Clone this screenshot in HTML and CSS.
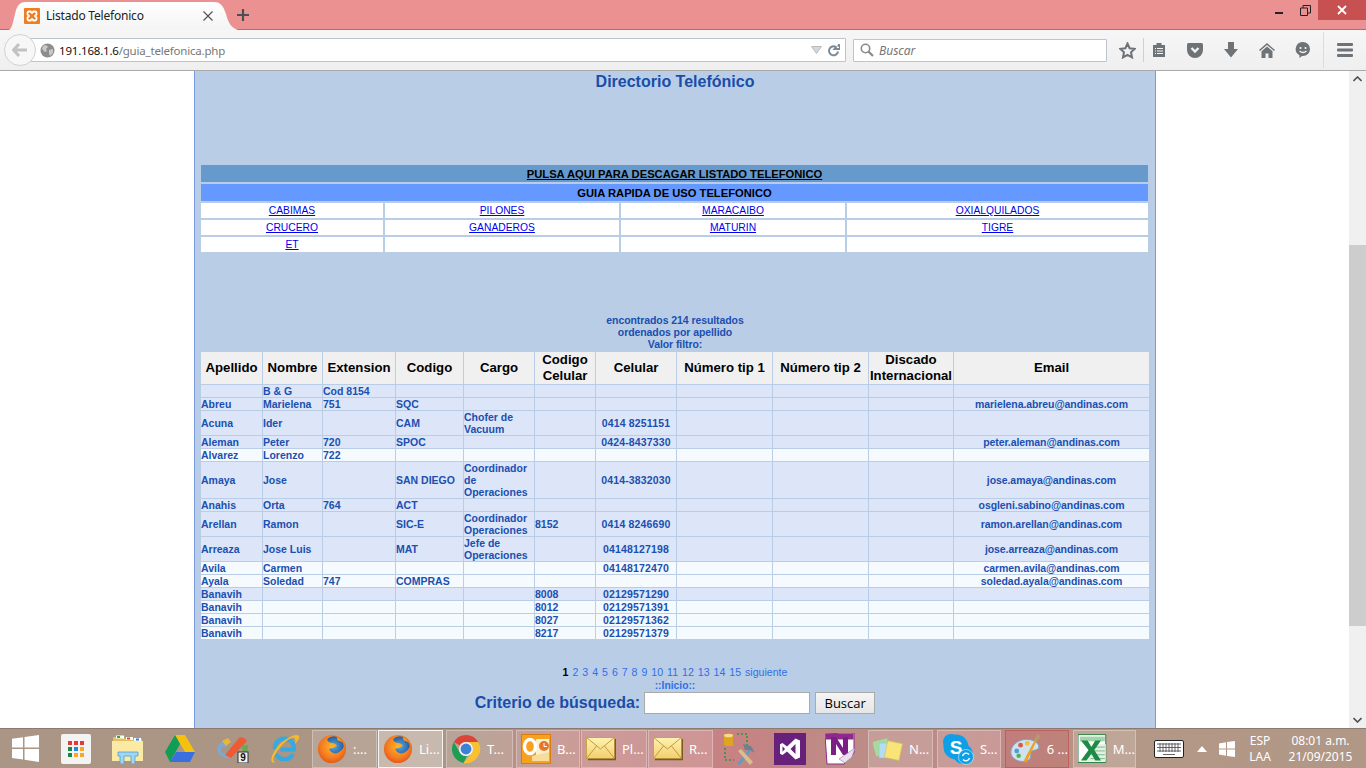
FILE: index.html
```html
<!DOCTYPE html>
<html lang="es">
<head>
<meta charset="utf-8">
<title>Listado Telefonico</title>
<link rel="stylesheet" href="styles.css">
</head>
<body>
<svg class="defs" width="0" height="0" aria-hidden="true">
  <defs>
    <radialGradient id="ffo" cx="0.5" cy="0.4" r="0.7"><stop offset="0" stop-color="#ffb627"/><stop offset="0.6" stop-color="#f47b20"/><stop offset="1" stop-color="#d9481c"/></radialGradient>
    <radialGradient id="ffb" cx="0.5" cy="0.5" r="0.6"><stop offset="0" stop-color="#5aa8e0"/><stop offset="1" stop-color="#1b4f96"/></radialGradient>
    <linearGradient id="env" x1="0" y1="0" x2="0" y2="1"><stop offset="0" stop-color="#fff3b0"/><stop offset="1" stop-color="#f3cf6e"/></linearGradient>
    <symbol id="firefox" viewBox="0 0 32 32">
      <circle cx="16" cy="16" r="15" fill="url(#ffo)"/>
      <circle cx="18" cy="13" r="10.5" fill="url(#ffb)"/>
      <path d="M2 15C3 8 7 3 12 2C10 5 11 8 14 9C17 10 21 10 21 13C19 15 15 15 13 16C15 21 20 22 24 19C27 17 29 14 30 11C32 21 25 31 15 31C7 31 1 23 2 15Z" fill="url(#ffo)"/>
      <path d="M21 3C24 4 27 7 28 10C26 8 24 7 22 7Z" fill="#f59a23"/>
    </symbol>
    <symbol id="envelope" viewBox="0 0 30 24">
      <rect x="0.5" y="0.5" width="28" height="21" fill="url(#env)" stroke="#c9a24a"/>
      <path d="M0.5 0.5L14.5 12L28.5 0.5M0.5 21.5L10.5 9M28.5 21.5L18.5 9" fill="none" stroke="#c09a45"/>
      <path d="M2 22.5H29.5V2" fill="none" stroke="#7a5a1e" stroke-width="1.5"/>
    </symbol>
  </defs>
</svg>

<header class="titlebar">
  <div class="tab">
    <svg class="favicon" width="16" height="16" viewBox="0 0 16 16"><rect width="16" height="16" rx="1" fill="#ef7d22"/><path d="M3.5 5Q3.5 3.5 5 3.5H6.5L8 5L9.5 3.5H11Q12.5 3.5 12.5 5V6.5L11 8L12.5 9.5V11Q12.5 12.5 11 12.5H9.5L8 11L6.5 12.5H5Q3.5 12.5 3.5 11V9.5L5 8L3.5 6.5Z" fill="none" stroke="#fff" stroke-width="1.8"/></svg>
    <span class="tab-title">Listado Telefonico</span>
    <svg class="tab-close" width="10" height="10" viewBox="0 0 10 10"><path d="M0.5 0.5L9.5 9.5M9.5 0.5L0.5 9.5" stroke="#555" stroke-width="1.2"/></svg>
  </div>
  <svg class="newtab" width="14" height="14" viewBox="0 0 14 14"><path d="M7 1V13M1 7H13" stroke="#4a4f55" stroke-width="2.2"/></svg>
  <div class="winctl">
    <span class="win-btn"><svg width="10" height="10" viewBox="0 0 10 10"><rect x="1" y="7" width="8" height="2" fill="#222"/></svg></span>
    <span class="win-btn"><svg width="11" height="11" viewBox="0 0 11 11"><path d="M0.5 3H7.5V10.5H0.5ZM3 3V0.5H10.5V8H7.5" fill="none" stroke="#222"/></svg></span>
    <span class="win-close"><svg width="10" height="10" viewBox="0 0 10 10"><path d="M1 1L9 9M9 1L1 9" stroke="#fff" stroke-width="1.8"/></svg></span>
  </div>
</header>

<nav class="navbar">
  <span class="back"><svg width="16" height="14" viewBox="0 0 16 14"><path d="M7 1L1.5 7L7 13M2 7H15" fill="none" stroke="#c2c2c2" stroke-width="3"/></svg></span>
  <div class="urlbar">
    <svg class="globe" width="15" height="15" viewBox="0 0 15 15"><circle cx="7.5" cy="7.5" r="7" fill="#8d8d8d"/><path d="M3 3L6 2L8 4L6 6L7 8L5 9L2 6ZM9 7L13 6L13 10L10 13L9 10Z" fill="#c9c9c9"/></svg>
    <span class="url-host">191.168.1.6</span><span class="url-path">/guia_telefonica.php</span>
    <svg class="url-drop" width="11" height="8" viewBox="0 0 11 8"><path d="M0.5 0.5H10.5L5.5 7.5Z" fill="#d4d8dc" stroke="#b8bcc0"/></svg>
    <svg class="url-reload" width="13" height="13" viewBox="0 0 13 13"><path d="M11 7.5A4.5 4.5 0 1 1 9 3L7.5 5H13V0L10.8 2.2" fill="none" stroke="#7d8a96" stroke-width="2"/></svg>
  </div>
  <div class="searchbar">
    <svg width="14" height="14" viewBox="0 0 14 14"><circle cx="5.5" cy="5.5" r="4.2" fill="none" stroke="#8a8a8a" stroke-width="1.6"/><path d="M8.5 8.5L13 13" stroke="#8a8a8a" stroke-width="2.2"/></svg>
    <span class="search-ph">Buscar</span>
  </div>
  <span class="tb tb-star"><svg width="17" height="17" viewBox="0 0 17 17"><path d="M8.5 1.5L10.6 6.2L15.8 6.8L12 10.3L13 15.4L8.5 12.9L4 15.4L5 10.3L1.2 6.8L6.4 6.2Z" fill="none" stroke="#6e7378" stroke-width="2"/></svg></span>
  <span class="tb tb-reader"><svg width="14" height="16" viewBox="0 0 14 16"><path d="M1 3H4.5V1H9.5V3H13V15H1Z" fill="#6e7378"/><path d="M3 6H4V7H3ZM5 6H11V7H5ZM3 8.5H4V9.5H3ZM5 8.5H11V9.5H5ZM3 11H4V12H3ZM5 11H11V12H5Z" fill="#f2f2f2"/></svg></span>
  <span class="tb"><svg width="16" height="15" viewBox="0 0 16 15"><path d="M0 1.5Q0 0 1.5 0H14.5Q16 0 16 1.5V7A8 8 0 0 1 0 7Z" fill="#6e7378"/><path d="M4.5 5L8 8.5L11.5 5" fill="none" stroke="#f2f2f2" stroke-width="2.4"/></svg></span>
  <span class="tb"><svg width="14" height="16" viewBox="0 0 14 16"><path d="M4 0H10V7H14L7 15.5L0 7H4Z" fill="#6e7378"/></svg></span>
  <span class="tb"><svg width="16" height="15" viewBox="0 0 16 15"><path d="M8 0L16 7L15 8L8 2L1 8L0 7Z" fill="#6e7378"/><path d="M8 3.5L13.5 8.2V15H9.5V10.5H6.5V15H2.5V8.2Z" fill="#6e7378"/></svg></span>
  <span class="tb"><svg width="16" height="16" viewBox="0 0 16 16"><path d="M8 0A7 7 0 0 1 8 14H7L4.5 16V13.2A7 7 0 0 1 8 0Z" fill="#6e7378"/><circle cx="5.5" cy="6" r="1.1" fill="#f2f2f2"/><circle cx="10.5" cy="6" r="1.1" fill="#f2f2f2"/><path d="M4.5 9Q8 12 11.5 9" fill="none" stroke="#f2f2f2" stroke-width="1.3"/></svg></span>
  <span class="tb-menu"><svg width="16" height="14" viewBox="0 0 16 14"><path d="M1 0H15Q16 0 16 1V2Q16 3 15 3H1Q0 3 0 2V1Q0 0 1 0ZM1 5.5H15Q16 5.5 16 6.5V7.5Q16 8.5 15 8.5H1Q0 8.5 0 7.5V6.5Q0 5.5 1 5.5ZM1 11H15Q16 11 16 12V13Q16 14 15 14H1Q0 14 0 13V12Q0 11 1 11Z" fill="#6e7378"/></svg></span>
</nav>

<div class="viewport">
  <div class="pagearea">
    <main class="page">
      <h1 class="title">Directorio Telefónico</h1>

      <section class="quick">
        <div class="q-download"><a href="#">PULSA AQUI PARA DESCAGAR LISTADO TELEFONICO</a></div>
        <div class="q-guide">GUIA RAPIDA DE USO TELEFONICO</div>
        <div class="q-cell"><a href="#">CABIMAS</a></div>
        <div class="q-cell"><a href="#">PILONES</a></div>
        <div class="q-cell"><a href="#">MARACAIBO</a></div>
        <div class="q-cell"><a href="#">OXIALQUILADOS</a></div>
        <div class="q-cell"><a href="#">CRUCERO</a></div>
        <div class="q-cell"><a href="#">GANADEROS</a></div>
        <div class="q-cell"><a href="#">MATURIN</a></div>
        <div class="q-cell"><a href="#">TIGRE</a></div>
        <div class="q-cell"><a href="#">ET</a></div>
        <div class="q-cell"></div>
        <div class="q-cell"></div>
        <div class="q-cell"></div>
      </section>

      <p class="results">encontrados 214 resultados<br>ordenados por apellido<br>Valor filtro:</p>

      <table class="dir">
        <colgroup>
          <col class="c1"><col class="c2"><col class="c3"><col class="c4"><col class="c5"><col class="c6"><col class="c7"><col class="c8"><col class="c9"><col class="c10"><col class="c11">
        </colgroup>
        <thead>
          <tr><th>Apellido</th><th>Nombre</th><th>Extension</th><th>Codigo</th><th>Cargo</th><th>Codigo Celular</th><th>Celular</th><th>Número tip 1</th><th>Número tip 2</th><th>Discado Internacional</th><th>Email</th></tr>
        </thead>
        <tbody>
          <tr><td></td><td>B &amp; G</td><td>Cod 8154</td><td></td><td></td><td></td><td class="ctr"></td><td></td><td></td><td></td><td class="ctr"></td></tr>
          <tr><td>Abreu</td><td>Marielena</td><td>751</td><td>SQC</td><td></td><td></td><td class="ctr"></td><td></td><td></td><td></td><td class="ctr">marielena.abreu@andinas.com</td></tr>
          <tr><td>Acuna</td><td>Ider</td><td></td><td>CAM</td><td>Chofer de Vacuum</td><td></td><td class="ctr">0414 8251151</td><td></td><td></td><td></td><td class="ctr"></td></tr>
          <tr><td>Aleman</td><td>Peter</td><td>720</td><td>SPOC</td><td></td><td></td><td class="ctr">0424-8437330</td><td></td><td></td><td></td><td class="ctr">peter.aleman@andinas.com</td></tr>
          <tr class="lt"><td>Alvarez</td><td>Lorenzo</td><td>722</td><td></td><td></td><td></td><td class="ctr"></td><td></td><td></td><td></td><td class="ctr"></td></tr>
          <tr><td>Amaya</td><td>Jose</td><td></td><td>SAN DIEGO</td><td>Coordinador de Operaciones</td><td></td><td class="ctr">0414-3832030</td><td></td><td></td><td></td><td class="ctr">jose.amaya@andinas.com</td></tr>
          <tr><td>Anahis</td><td>Orta</td><td>764</td><td>ACT</td><td></td><td></td><td class="ctr"></td><td></td><td></td><td></td><td class="ctr">osgleni.sabino@andinas.com</td></tr>
          <tr><td>Arellan</td><td>Ramon</td><td></td><td>SIC-E</td><td>Coordinador Operaciones</td><td>8152</td><td class="ctr">0414 8246690</td><td></td><td></td><td></td><td class="ctr">ramon.arellan@andinas.com</td></tr>
          <tr><td>Arreaza</td><td>Jose Luis</td><td></td><td>MAT</td><td>Jefe de Operaciones</td><td></td><td class="ctr">04148127198</td><td></td><td></td><td></td><td class="ctr">jose.arreaza@andinas.com</td></tr>
          <tr class="lt"><td>Avila</td><td>Carmen</td><td></td><td></td><td></td><td></td><td class="ctr">04148172470</td><td></td><td></td><td></td><td class="ctr">carmen.avila@andinas.com</td></tr>
          <tr class="lt"><td>Ayala</td><td>Soledad</td><td>747</td><td>COMPRAS</td><td></td><td></td><td class="ctr"></td><td></td><td></td><td></td><td class="ctr">soledad.ayala@andinas.com</td></tr>
          <tr><td>Banavih</td><td></td><td></td><td></td><td></td><td>8008</td><td class="ctr">02129571290</td><td></td><td></td><td></td><td class="ctr"></td></tr>
          <tr class="lt"><td>Banavih</td><td></td><td></td><td></td><td></td><td>8012</td><td class="ctr">02129571391</td><td></td><td></td><td></td><td class="ctr"></td></tr>
          <tr class="lt"><td>Banavih</td><td></td><td></td><td></td><td></td><td>8027</td><td class="ctr">02129571362</td><td></td><td></td><td></td><td class="ctr"></td></tr>
          <tr class="lt"><td>Banavih</td><td></td><td></td><td></td><td></td><td>8217</td><td class="ctr">02129571379</td><td></td><td></td><td></td><td class="ctr"></td></tr>
        </tbody>
      </table>

      <div class="pager"><b>1</b> <a href="#">2</a> <a href="#">3</a> <a href="#">4</a> <a href="#">5</a> <a href="#">6</a> <a href="#">7</a> <a href="#">8</a> <a href="#">9</a> <a href="#">10</a> <a href="#">11</a> <a href="#">12</a> <a href="#">13</a> <a href="#">14</a> <a href="#">15</a> <a href="#">siguiente</a></div>
      <div class="home"><a href="#">::Inicio::</a></div>
      <form class="crit">
        <label class="crit-label" for="q">Criterio de búsqueda:</label>
        <input class="crit-input" id="q" type="text">
        <button class="crit-btn" type="button">Buscar</button>
      </form>
    </main>
  </div>
  <aside class="scrollbar">
    <svg class="sb-arrow" width="9" height="6" viewBox="0 0 9 6"><path d="M0.5 5L4.5 1L8.5 5" fill="none" stroke="#505050" stroke-width="1.6"/></svg>
    <div class="sb-up"></div>
    <div class="sb-thumb"></div>
    <div class="sb-down"></div>
    <svg class="sb-arrow" width="9" height="6" viewBox="0 0 9 6"><path d="M0.5 1L4.5 5L8.5 1" fill="none" stroke="#505050" stroke-width="1.6"/></svg>
  </aside>
</div>

<footer class="taskbar">
  <span class="start"><svg width="27" height="27" viewBox="0 0 27 27"><path d="M0 3.8L11 2.2V12.5H0ZM12.5 2L27 0V12.5H12.5ZM0 14H11V24.6L0 23ZM12.5 14H27V27L12.5 24.8Z" fill="#fff"/></svg></span>

  <span class="pin"><svg width="30" height="30" viewBox="0 0 30 30"><rect width="30" height="30" rx="2" fill="#f3f3f3"/><g><rect x="7" y="7" width="4" height="4" fill="#e53935"/><rect x="13" y="7" width="4" height="4" fill="#e53935"/><rect x="19" y="7" width="4" height="4" fill="#e53935"/><rect x="7" y="13" width="4" height="4" fill="#148a4a"/><rect x="13" y="13" width="4" height="4" fill="#1e88e5"/><rect x="19" y="13" width="4" height="4" fill="#f9a825"/><rect x="7" y="19" width="4" height="4" fill="#148a4a"/><rect x="13" y="19" width="4" height="4" fill="#f9a825"/><rect x="19" y="19" width="4" height="4" fill="#f9a825"/></g></svg></span>
  <span class="pin"><svg width="32" height="30" viewBox="0 0 32 30"><path d="M1 3H12L14 5H30V24H1Z" fill="#e2c25c"/><rect x="4" y="1.5" width="8" height="3" fill="#fff"/><rect x="5" y="2" width="3" height="2" fill="#2da84b"/><rect x="14" y="3" width="7" height="3" fill="#fff"/><rect x="15" y="3.5" width="3" height="2" fill="#d9453a"/><rect x="22" y="4" width="7" height="3" fill="#fff"/><rect x="24" y="4.5" width="3" height="2" fill="#2e7fd8"/><path d="M0 7H31V27H0Z" fill="#fbeaa6"/><path d="M6 18H26V22H23V30H19V22H12V30H8V22H6Z" fill="#9fd6f2" stroke="#4c9fd0" stroke-width="0.8"/></svg></span>
  <span class="pin"><svg width="30" height="27" viewBox="0 0 30 27"><path d="M10 0H20L30 17H20Z" fill="#f4c20d"/><path d="M10 0L0 17L5 27L15 9Z" fill="#0f9d58"/><path d="M11 17H30L25 27H5Z" fill="#3a6fe0"/></svg></span>
  <span class="pin"><svg width="33" height="28" viewBox="0 0 33 28"><path d="M1 14C2 8 8 5 13 8L10 12C7 11 5 13 5 15C5 18 9 20 12 18L16 22C10 25 2 22 1 14Z" fill="#7fa7cf"/><path d="M6 6L12 3L15 7L10 11Z" fill="#e9b63a"/><path d="M9 20L23 3C25 1 29 3 31 6L15 23Z" fill="#ee5b33"/><path d="M26 11L32 10C33 14 30 19 27 20Z" fill="#68a84f"/><rect x="22" y="17" width="10" height="11" fill="#f0f0f0" stroke="#333"/><text class="vs-nine" x="27" y="26" text-anchor="middle">9</text></svg></span>
  <span class="pin"><svg width="31" height="31" viewBox="0 0 31 31"><path d="M6 16.5A9.5 9.5 0 1 1 24.8 16.5H11.5M24 21A9.5 9.5 0 0 1 7 21" fill="none" stroke="#36a9e1" stroke-width="4.2"/><path d="M3 29C0 25 8 12 16 7C23 2 28 1 30 3C31 5 28 9 26 11C27 7 26 4 23 5C16 7 8 17 5 24C4 26 4 28 6 29C5 30 4 30 3 29Z" fill="#f3bb2c"/></svg></span>

  <span class="task g2"><svg width="30" height="30"><use href="#firefox"/></svg><span class="task-label">:...</span></span>
  <span class="task task-active g1"><svg width="30" height="30"><use href="#firefox"/></svg><span class="task-label">Li...</span></span>
  <span class="task task-w67 g3"><svg width="30" height="30" viewBox="0 0 32 32"><path d="M3 8.5A15 15 0 0 1 29 8.5L16 8.5C13 8.5 10.5 10 9.5 12.2Z" fill="#dc4437"/><path d="M3 8.5L9.5 20C11 22.5 14 24 17 23.5L13.4 30.8A15 15 0 0 1 3 8.5Z" fill="#1e9e55"/><path d="M29 8.5L16 8.5C19 8.5 22.5 11 23.2 14C23.8 17 22.5 20 21.5 21L13.4 30.8A15 15 0 0 0 29 8.5Z" fill="#fbc02d"/><circle cx="16" cy="16" r="7.5" fill="#f4f4f4"/><circle cx="16" cy="16" r="5.8" fill="#3b82d6"/></svg><span class="task-label">T...</span></span>
  <span class="task task-w64 g3"><svg width="30" height="30" viewBox="0 0 30 30"><rect x="0.5" y="0.5" width="29" height="29" fill="#f6a11f" stroke="#d97d10"/><path d="M15 5H28V25H15Z" fill="#fdf0c8"/><ellipse cx="9" cy="12.5" rx="5.5" ry="7" fill="none" stroke="#fff" stroke-width="3.4"/><circle cx="23" cy="12" r="5" fill="#e8762a"/><path d="M23 9V12.5H26" fill="none" stroke="#fff"/><path d="M11 22L28 18V27H11Z" fill="#f8dc9a"/></svg><span class="task-label">B...</span></span>
  <span class="task task-w66 g1"><svg width="30" height="24"><use href="#envelope"/></svg><span class="task-label">Pl...</span></span>
  <span class="task g1"><svg width="30" height="24"><use href="#envelope"/></svg><span class="task-label">R...</span></span>

  <span class="pin pin-w"><svg width="32" height="32" viewBox="0 0 32 32"><path d="M2 11V27H11M14 1H24V12" fill="none" stroke="#2a9b3c" stroke-width="1.6" stroke-dasharray="2 2"/><rect x="1" y="1" width="9" height="12" rx="1.5" fill="#e0a51e"/><ellipse cx="5.5" cy="2.5" rx="4.5" ry="1.8" fill="#f4dc8c"/><path d="M14 31L26 16L28 18L17 32Z" fill="#5f9ec2"/><path d="M15 18L18 16L30 29L27 32Z" fill="#d8c08c"/><path d="M20 11L28 13L32 20L27 17L22 17Z" fill="#70808c"/></svg></span>
  <span class="pin pin-w"><svg width="32" height="32" viewBox="0 0 32 32"><rect width="32" height="32" fill="#68217a"/><path d="M21.5 5.5L26 7.5V24.5L21.5 26.5L13 18.5L8.5 22L6 20.8V11.2L8.5 10L13 13.5ZM21.5 11L16.5 16L21.5 21ZM8.5 13.2V18.8L11 16Z" fill="#fff" fill-rule="evenodd"/></svg></span>
  <span class="pin pin-w"><svg width="31" height="32" viewBox="0 0 31 32"><path d="M0 2L14 0H29V20L19 31H2Z" fill="#fff" stroke="#8e2a8e"/><rect x="0.5" y="0.5" width="28" height="6" fill="#8e2a8e"/><path d="M6 22V4H11L18 15V4H23V22H18L11 11V22Z" fill="#7b1f86"/><path d="M14 26L30 15L27 24L20 30Z" fill="#e8e0ee" stroke="#a070a8" stroke-width="0.6"/></svg></span>

  <span class="task g2"><svg width="30" height="30" viewBox="0 0 30 30"><rect x="1" y="6" width="15" height="15" transform="rotate(-15 8 13)" fill="#a6dc9a"/><rect x="6" y="9" width="15" height="15" fill="#b4dcf4" stroke="#88bcdc" stroke-width="0.5"/><rect x="13" y="8" width="15" height="17" transform="rotate(12 20 16)" fill="#f8e478" stroke="#d8c050" stroke-width="0.6"/></svg><span class="task-label">N...</span></span>
  <span class="task task-w64 g4"><svg width="32" height="32" viewBox="0 0 32 32"><circle cx="9" cy="9" r="8" fill="#0e9fe6"/><circle cx="21" cy="21" r="10" fill="#0e9fe6"/><circle cx="14" cy="14" r="12.5" fill="#0e9fe6"/><text class="sk-s" x="14" y="21" text-anchor="middle">S</text><circle cx="24" cy="24" r="7.5" fill="#0e9fe6" stroke="#fff" stroke-width="0.5"/><path d="M20.5 23A3.7 3.7 0 0 1 27 21.5M27.5 25A3.7 3.7 0 0 1 21 26.5" fill="none" stroke="#fff" stroke-width="1.4"/></svg><span class="task-label">S...</span></span>
  <span class="task task-w64 task-paint g4"><svg width="32" height="32" viewBox="0 0 32 32"><path d="M1 21C0 13 8 6 17 6C25 6 30 10 30 14C30 17 25 17 23 18C20 19 23 24 20 27C15 31 3 29 1 21Z" fill="#cfe2ee" stroke="#7fa6c0"/><circle cx="7" cy="18" r="2.5" fill="#4a9fd8"/><circle cx="11" cy="12" r="2.5" fill="#e05a3a"/><circle cx="18" cy="10" r="2.5" fill="#f0c040"/><circle cx="9" cy="23" r="2.3" fill="#58b04a"/><path d="M14 29L26 6L28 7L17 30Z" fill="#f0a020"/><path d="M25 7L29 0L32 3L28 8Z" fill="#b89a6a"/></svg><span class="task-label">6 ...</span></span>
  <span class="task task-w63 g4"><svg width="30" height="30" viewBox="0 0 30 30"><path d="M0 0H29V29H0Z" fill="#fff" stroke="#1f7a3f"/><path d="M2 2H28V7H2Z" fill="#9fd5a8"/><path d="M14 10H29V28H10Z" fill="#e3f0e4"/><path d="M16 13H28M15 17H28M14 21H28M13 25H28" stroke="#7ab98a"/><path d="M3 6H10L14 13L18 6H24L17 16L24 27H18L14 20L9 27H3L11 16Z" fill="#1f8a45"/></svg><span class="task-label">M...</span></span>

  <span class="tray-kbd"><svg width="30" height="18" viewBox="0 0 30 18"><rect x="0.5" y="0.5" width="29" height="17" rx="1.5" fill="#fff" stroke="#222"/><path d="M3 4H27M3 7.5H27M3 11H27M9 14.5H21M6 3V12M9 3V12M12 3V12M15 3V12M18 3V12M21 3V12M24 3V12" stroke="#555" stroke-width="0.9"/></svg></span>
  <span class="tray-caret"><svg width="10" height="6" viewBox="0 0 10 6"><path d="M0 6L5 0L10 6Z" fill="#fff"/></svg></span>
  <span class="tray-flag"><svg width="16" height="16" viewBox="0 0 16 16"><path d="M0 2.5L7 1.2V7.5H0ZM8 1L16 0V7.5H8ZM0 8.5H7V14.8L0 13.5ZM8 8.5H16V16L8 15Z" fill="#fff"/></svg></span>
  <span class="tray-lang">ESP<br>LAA</span>
  <span class="tray-clock">08:01 a.m.<br>21/09/2015</span>
</footer>
</body>
</html>
```

FILE: styles.css
```css
* { box-sizing: border-box; }
html, body { margin: 0; padding: 0; height: 768px; overflow: hidden; }
body { display: flex; flex-direction: column; font-family: "Liberation Sans", Arial, sans-serif; background: #fff; }
.defs { display: block; height: 0; }

/* ---------- window chrome ---------- */
.titlebar { height: 30px; flex: none; display: flex; align-items: flex-end; background: #ec9191; box-shadow: inset 0 -1px 0 #b96a6c; }
.tab { width: 230px; height: 30px; margin-left: 8px; padding: 2px 0 0 16px; display: flex; align-items: center; background: linear-gradient(#fff, #f4f4f4); clip-path: path("M0 30C4 30 5 22 7 14C9 5 12 2 18 2L206 2C212 2 215 5 218 14C220 22 223 28 230 30Z"); }
.favicon { flex: none; }
.tab-title { margin-left: 6px; width: 157px; font: 12px/16px "Noto Sans", sans-serif; letter-spacing: -0.2px; color: #222; white-space: nowrap; }
.newtab { flex: none; margin: 0 0 8px -2px; }
.winctl { margin-left: auto; align-self: flex-start; display: flex; height: 20px; }
.win-btn { width: 26px; display: flex; align-items: center; justify-content: center; }
.win-close { width: 48px; margin-left: 0; display: flex; align-items: center; justify-content: center; background: #c75050; }

.navbar { height: 41px; flex: none; display: flex; align-items: center; padding-left: 4px; background: linear-gradient(#f6f6f6, #efefef); border-bottom: 1px solid #a9a9a9; }
.back { position: relative; z-index: 1; flex: none; width: 32px; height: 32px; display: flex; align-items: center; justify-content: center; border-radius: 50%; background: #f7f7f7; border: 1px solid #d2d2d2; }
.urlbar { flex: none; width: 826px; height: 24px; margin-left: -16px; padding: 0 5px 0 19px; display: flex; align-items: center; background: #fff; border: 1px solid #bcc4d0; border-radius: 1px; font: 11.5px/16px "Noto Sans", sans-serif; letter-spacing: -0.2px; }
.globe { flex: none; margin-right: 4px; }
.url-host { padding-top: 2px; color: #111; }
.url-path { padding-top: 2px; color: #777; }
.url-drop { margin-left: auto; }
.url-reload { margin-left: 5px; }
.searchbar { flex: none; width: 254px; height: 23px; margin-left: 7px; padding-left: 6px; display: flex; align-items: center; gap: 5px; background: #fff; border: 1px solid #bcc4d0; border-radius: 1px; }
.search-ph { padding-top: 2px; font: italic 12px/16px "Noto Sans", sans-serif; color: #777; }
.tb { flex: none; width: 36px; height: 24px; display: flex; align-items: center; justify-content: center; }
.tb-star { width: 34px; margin-left: 3px; padding-left: 2px; border-right: 1px solid #d0d0d0; }
.tb-reader { width: 30px; margin-right: 3px; }
.tb-menu { flex: none; width: 43px; height: 36px; margin-left: 2px; display: flex; align-items: center; justify-content: center; border-left: 1px solid #dcdcdc; }

/* ---------- viewport ---------- */
.viewport { flex: 1; min-height: 0; display: flex; background: #fff; }
.pagearea { flex: 1; min-width: 0; overflow: hidden; }
.page { width: 962px; height: 657px; margin-left: 194px; padding: 0 5px; background: #b9cde7; border-left: 1px solid #7b9be0; border-right: 1px solid #7b9be0; }
.title { margin: 0; padding-top: 2px; height: 94px; font-size: 16px; line-height: 18px; font-weight: bold; text-align: center; color: #1a4da8; }

.quick { margin: 0 2px 0 1px; display: grid; grid-template-columns: 182px 234px 224px 1fr; grid-template-rows: 17px 17px 15px 15px 15px; gap: 2px; font-size: 10.3px; text-align: center; }
.q-download, .q-guide { grid-column: 1 / -1; font-size: 11.2px; line-height: 18px; font-weight: bold; color: #000; }
.q-download { background: #6699cc; }
.q-download a { color: #000; }
.q-guide { background: #6699ff; }
.q-cell { background: #fff; line-height: 15px; }
.q-cell a { color: #0000ee; }

.results { margin: 62px 0 0; font-size: 10.5px; letter-spacing: -0.08px; line-height: 12px; font-weight: bold; text-align: center; color: #1b4fb0; }

.dir { width: 950px; margin-top: 1px; table-layout: fixed; border-collapse: separate; border-spacing: 1px; font-size: 10.5px; line-height: 12px; font-weight: bold; color: #1b4fb0; }
.c1 { width: 61px; } .c2 { width: 59px; } .c3 { width: 72px; } .c4 { width: 67px; } .c5 { width: 70px; } .c6 { width: 60px; } .c7 { width: 80px; } .c8 { width: 95px; } .c9 { width: 95px; } .c10 { width: 84px; } .c11 { width: 195px; }
.dir th { padding: 0; background: #f0f0f0; color: #000; font-size: 13.2px; line-height: 16px; text-align: center; }
.dir td { height: 12px; padding: 0; background: #dce6f8; text-align: left; vertical-align: middle; }
.dir .lt td { background: #f5faff; }
.dir td.ctr { text-align: center; letter-spacing: 0.15px; }
.dir td:last-child { letter-spacing: -0.08px; }

.pager { margin-top: 26px; font-size: 10.6px; line-height: 13px; text-align: center; color: #000; word-spacing: 1px; }
.pager a, .home a { color: #2f6fe8; text-decoration: none; }
.home { font-size: 10.3px; line-height: 13px; font-weight: bold; text-align: center; }
.crit { display: flex; align-items: center; justify-content: center; height: 22px; }
.crit-label { font-size: 16px; font-weight: bold; color: #1a4da8; }
.crit-input { width: 166px; height: 22px; margin-left: 4px; padding: 0; background: #fff; border: 1px solid #aaa; }
.crit-btn { width: 60px; height: 22px; margin-left: 5px; padding: 0; font: 13px "Open Sans", sans-serif; color: #000; background: linear-gradient(#f4f4f4, #e6e6e6); border: 1px solid #aaa; }

.scrollbar { flex: none; width: 17px; display: flex; flex-direction: column; align-items: center; background: #f0f0f0; padding-top: 5px; padding-bottom: 5px; }
.sb-arrow { flex: none; }
.sb-up { flex: none; height: 163px; }
.sb-thumb { flex: none; width: 17px; height: 381px; background: #cdcdcd; }
.sb-down { flex: 1; }

/* ---------- taskbar ---------- */
.taskbar { height: 40px; flex: none; display: flex; align-items: center; color: #fff; background: linear-gradient(90deg, #ab9585 0, #ac9585 470px, #c18c88 560px, #c78282 730px, #bb8e88 880px, #c08884 1000px, #b39886 1130px, #b19786 100%); border-top: 1px solid #8c7a70; font: 12px/16px "Noto Sans", sans-serif; }
.start { flex: none; width: 50px; display: flex; justify-content: center; }
.pin { flex: none; width: 52px; display: flex; justify-content: center; }
.pin-w { width: 51px; }
.task { flex: none; width: 65px; height: 38px; padding-left: 4px; display: flex; align-items: center; background: rgba(255, 255, 255, 0.15); border: 1px solid rgba(255, 255, 255, 0.3); }
.task-label { margin-left: 6px; white-space: nowrap; font-size: 13px; }
.task-active { background: rgba(255, 255, 255, 0.34); border-color: rgba(255, 255, 255, 0.85); }
.task-w67 { width: 67px; }
.task-w66 { width: 66px; }
.task-w64 { width: 64px; }
.task-w63 { width: 63px; }
.task-paint { background: rgba(200, 90, 90, 0.25); border-color: rgba(190, 70, 70, 0.55); }
.g1 { margin-left: 1px; }
.g2 { margin-left: 2px; }
.g3 { margin-left: 3px; }
.g4 { margin-left: 4px; }
.tray-kbd { flex: none; width: 38px; margin-left: 14px; display: flex; justify-content: center; }
.tray-caret { flex: none; width: 28px; display: flex; justify-content: center; }
.tray-flag { flex: none; width: 22px; display: flex; justify-content: center; }
.tray-lang { flex: none; width: 44px; text-align: center; line-height: 16px; }
.tray-clock { flex: none; width: 74px; padding-left: 3px; text-align: center; line-height: 16px; }
.vs-nine { font: bold 10px "Liberation Sans", sans-serif; fill: #111; }
.sk-s { font: bold 19px "Liberation Sans", sans-serif; fill: #fff; }
```
